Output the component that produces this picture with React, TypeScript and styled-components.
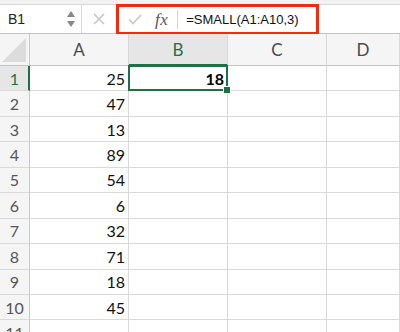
import styled, { createGlobalStyle, css } from 'styled-components'

const GlobalStyle = createGlobalStyle`
  html, body {
    margin: 0;
    padding: 0;
    background: #ffffff;
    overflow: hidden;
  }
  body {
    width: 400px;
    height: 332px;
    font-family: Lato, "Liberation Sans", sans-serif;
  }
`

const GREEN = '#1e7145'

const values = [25, 47, 13, 89, 54, 6, 32, 71, 18, 45, null]
const columns = ['A', 'B', 'C', 'D']

const Page = styled.div`
  width: 400px;
  height: 332px;
  overflow: hidden;
  display: flex;
  flex-direction: column;
`

const Toolbar = styled.div`
  background: #f2f2f2;
  padding-top: 4px;
`

const Bar = styled.div`
  display: flex;
  align-items: stretch;
  height: 28px;
  background: #ffffff;
  border-top: 1px solid #d6d6d6;
  border-bottom: 1px solid #c4c4c4;
`

const NameBox = styled.div`
  width: 82px;
  display: flex;
  align-items: center;
  justify-content: space-between;
  padding: 0 4px 0 8px;
  box-sizing: border-box;
  border-right: 1px solid #d9d9d9;
  font-family: "Liberation Sans", Arial, sans-serif;
  font-size: 14px;
  color: #222;
`

const Stepper = styled.div`
  display: flex;
  flex-direction: column;
  gap: 4px;
  margin-right: 2px;
`

const Cancel = styled.div`
  width: 34px;
  display: flex;
  align-items: center;
  justify-content: center;
`

const Highlight = styled.div`
  display: flex;
  align-items: center;
  width: 203px;
  margin: -1px 0 -2px;
  box-sizing: border-box;
  border: 3px solid #f52a0c;
  padding-left: 9px;
`

const Fx = styled.span`
  font-family: "Liberation Serif", "DejaVu Serif", serif;
  font-style: italic;
  font-size: 17px;
  color: #555;
  margin-left: 13px;
  letter-spacing: 0.5px;
`

const Divider = styled.span`
  width: 1px;
  height: 19px;
  background: #d4d4d4;
  margin: 0 8px 0 9px;
`

const FormulaText = styled.span`
  font-family: "Liberation Sans", Arial, sans-serif;
  font-size: 13px;
  color: #111;
`

const Sheet = styled.div`
  display: grid;
  grid-template-columns: 30px 99px 99px 99px 1fr;
  grid-template-rows: 32px;
  grid-auto-rows: 25.45px;
`

const headerBase = css`
  background: #f5f5f5;
  display: flex;
  align-items: center;
  justify-content: center;
  color: #4a4a4a;
  box-sizing: border-box;
`

const Corner = styled.div`
  ${headerBase};
  position: relative;
  border-right: 1px solid #c9c9c9;
  border-bottom: 1px solid #c4c4c4;
`

const ColHeader = styled.div<{ $active?: boolean }>`
  ${headerBase};
  font-size: 17px;
  border-right: 1px solid #d9d9d9;
  border-bottom: ${p => (p.$active ? `2px solid ${GREEN}` : '1px solid #c4c4c4')};
  background: ${p => (p.$active ? '#e6e6e6' : '#f5f5f5')};
  color: ${p => (p.$active ? GREEN : '#4a4a4a')};
  padding-top: ${p => (p.$active ? '1px' : '0')};
`

const RowHeader = styled.div<{ $active?: boolean }>`
  ${headerBase};
  font-size: 16px;
  border-right: ${p => (p.$active ? `2px solid ${GREEN}` : '1px solid #c9c9c9')};
  border-bottom: 1px solid #d9d9d9;
  background: ${p => (p.$active ? '#e6e6e6' : '#f5f5f5')};
  color: ${p => (p.$active ? GREEN : '#555')};
  padding-left: ${p => (p.$active ? '1px' : '0')};
`

const Cell = styled.div<{ $selected?: boolean }>`
  position: relative;
  box-sizing: border-box;
  display: flex;
  align-items: center;
  justify-content: flex-end;
  padding-right: 3px;
  font-size: 16px;
  color: #111;
  border-right: 1px solid #d9d9d9;
  border-bottom: 1px solid #d9d9d9;
  ${p =>
    p.$selected &&
    css`
      font-weight: 700;
      color: #000;
      &::after {
        content: '';
        position: absolute;
        left: -1px;
        top: -1px;
        right: -1px;
        bottom: -1px;
        border: 2px solid ${GREEN};
      }
    `}
`

const Handle = styled.span`
  position: absolute;
  right: -4px;
  bottom: -4px;
  width: 6px;
  height: 6px;
  background: ${GREEN};
  border: 1px solid #fff;
  z-index: 2;
`

function Arrows() {
  return (
    <Stepper>
      <svg width='8' height='6' viewBox='0 0 8 6'>
        <path d='M4 0 L8 6 L0 6 Z' fill='#888' />
      </svg>
      <svg width='8' height='6' viewBox='0 0 8 6'>
        <path d='M0 0 L8 0 L4 6 Z' fill='#888' />
      </svg>
    </Stepper>
  )
}

export default function App() {
  return (
    <Page>
      <GlobalStyle />
      <Toolbar>
        <Bar>
          <NameBox>
            <span>B1</span>
            <Arrows />
          </NameBox>
          <Cancel>
            <svg width='12' height='12' viewBox='0 0 12 12'>
              <path d='M1 1 L11 11 M11 1 L1 11' stroke='#c6c6c6' strokeWidth='1.6' />
            </svg>
          </Cancel>
          <Highlight>
            <svg width='14' height='11' viewBox='0 0 14 11'>
              <path d='M1 5.5 L5 9.5 L13 1' stroke='#c9c9c9' strokeWidth='1.7' fill='none' />
            </svg>
            <Fx>fx</Fx>
            <Divider />
            <FormulaText>=SMALL(A1:A10,3)</FormulaText>
          </Highlight>
        </Bar>
      </Toolbar>
      <Sheet>
        <Corner>
          <svg
            width='24'
            height='24'
            viewBox='0 0 24 24'
            style={{ position: 'absolute', right: 3, bottom: 3 }}
          >
            <path d='M24 0 L24 24 L0 24 Z' fill='#dcdcdc' />
          </svg>
        </Corner>
        {columns.map(c => (
          <ColHeader key={c} $active={c === 'B'}>
            {c}
          </ColHeader>
        ))}
        {values.map((v, i) => (
          <Row key={i} index={i} value={v} />
        ))}
      </Sheet>
    </Page>
  )
}

function Row({ index, value }: { index: number; value: number | null }) {
  const first = index === 0
  return (
    <>
      <RowHeader $active={first}>{index + 1}</RowHeader>
      <Cell>{value ?? ''}</Cell>
      <Cell $selected={first}>
        {first ? '18' : ''}
        {first && <Handle />}
      </Cell>
      <Cell />
      <Cell />
    </>
  )
}
